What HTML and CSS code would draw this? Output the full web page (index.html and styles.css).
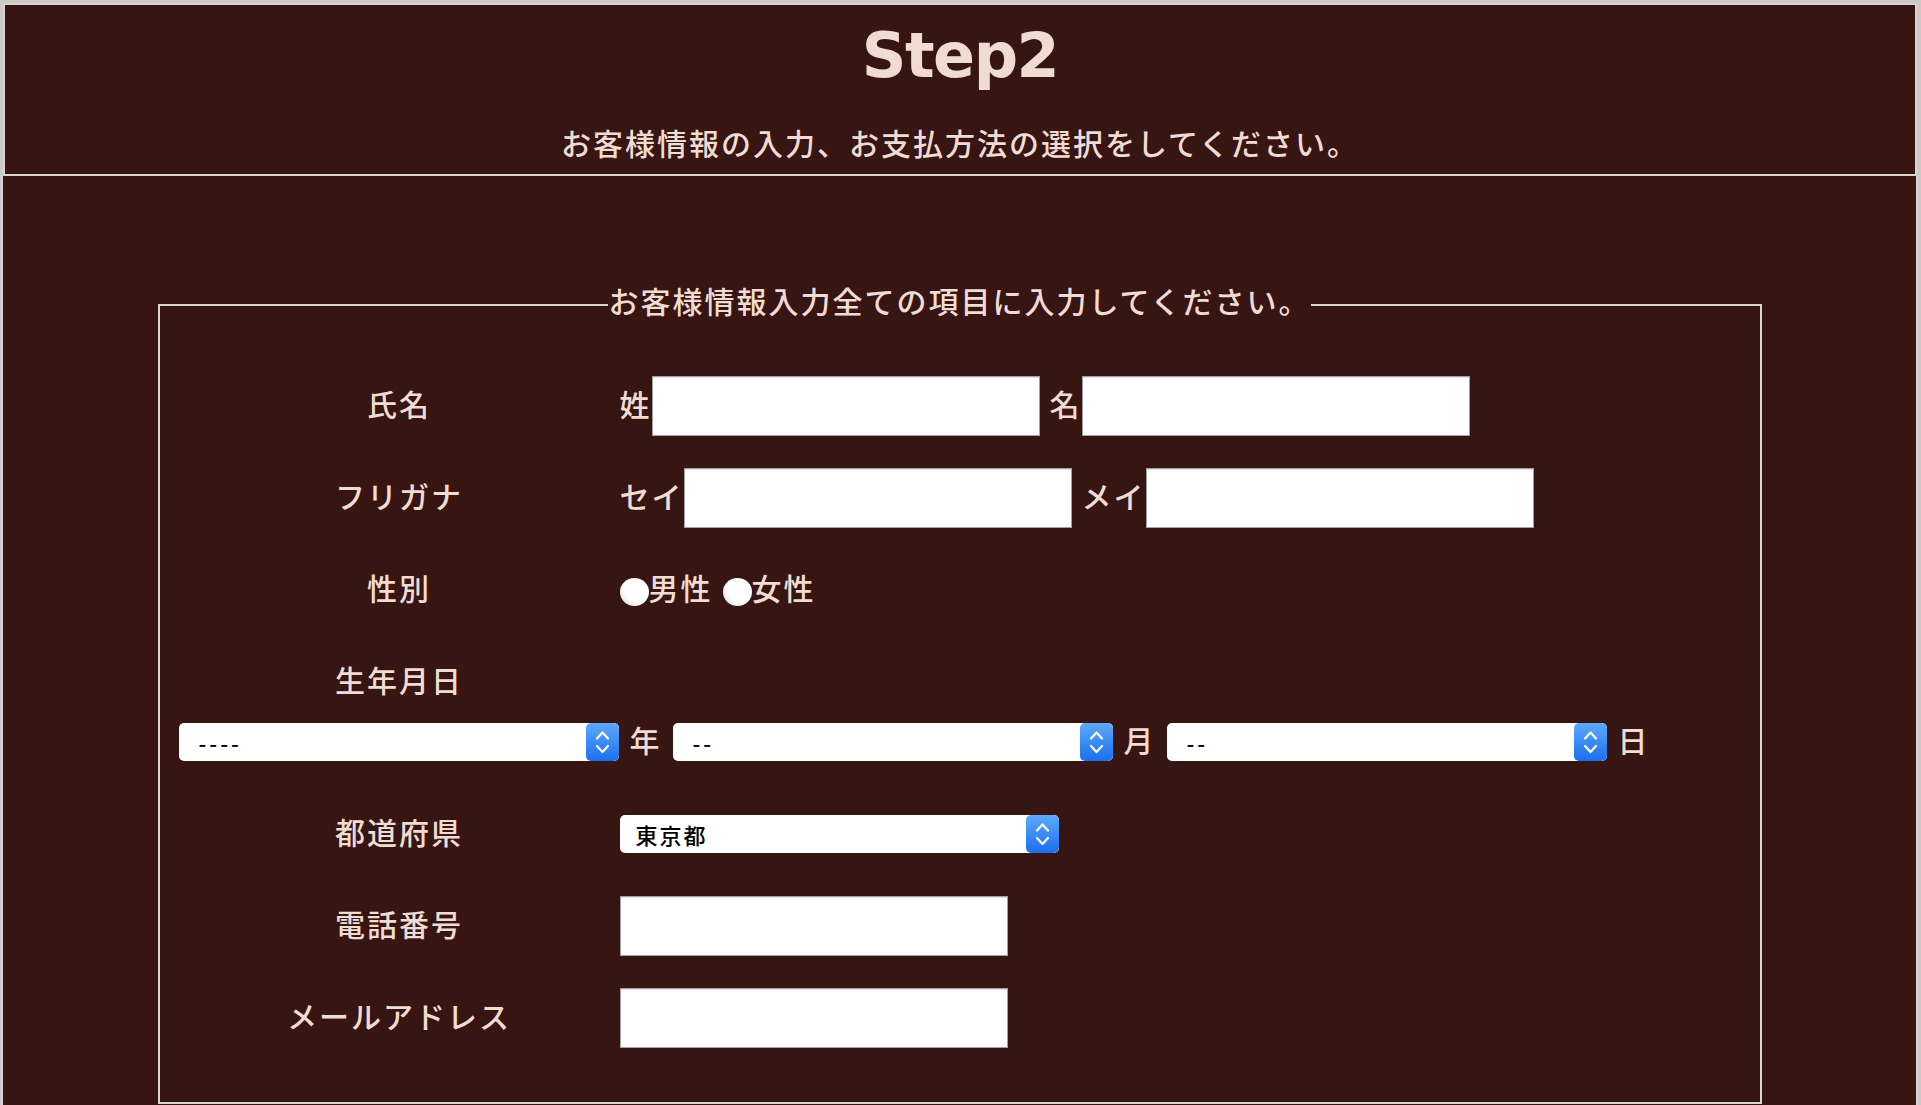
FILE: index.html
```html
<!DOCTYPE html>
<html lang="ja">
<head>
<meta charset="utf-8">
<title>Step2 お客様情報の入力</title>
<link rel="stylesheet" href="styles.css">
</head>
<body>
<header class="page-head">
  <h1 class="step-title">Step2</h1>
  <p class="step-lead">お客様情報の入力、お支払方法の選択をしてください。</p>
</header>
<main class="page-main">
  <form class="order-form">
    <fieldset class="info-set">
      <legend class="info-legend">お客様情報入力全ての項目に入力してください。</legend>

      <div class="row">
        <div class="row-label">氏名</div>
        <div class="row-value">
          <label class="pair"><span class="txt">姓</span><input class="text-box" type="text" name="last_name"></label>
          <label class="pair"><span class="txt">名</span><input class="text-box" type="text" name="first_name"></label>
        </div>
      </div>

      <div class="row">
        <div class="row-label">フリガナ</div>
        <div class="row-value">
          <label class="pair"><span class="txt">セイ</span><input class="text-box" type="text" name="last_kana"></label>
          <label class="pair"><span class="txt">メイ</span><input class="text-box" type="text" name="first_kana"></label>
        </div>
      </div>

      <div class="row">
        <div class="row-label">性別</div>
        <div class="row-value">
          <label class="choice"><input class="radio" type="radio" name="sex" value="m"><span class="txt">男性</span></label>
          <label class="choice"><input class="radio" type="radio" name="sex" value="f"><span class="txt">女性</span></label>
        </div>
      </div>

      <div class="row row-tight">
        <div class="row-label">生年月日</div>
      </div>
      <div class="date-row">
        <div class="select-box select-wide">
          <select class="select" name="year"><option>----</option><option>1990</option><option>1991</option></select>
          <span class="stepper"><svg width="33" height="38" viewBox="0 0 33 38"><polyline points="11,15.5 16.5,9.5 22,15.5" fill="none" stroke="#fff" stroke-width="2.2" stroke-linecap="round" stroke-linejoin="round"/><polyline points="11,23 16.5,29 22,23" fill="none" stroke="#fff" stroke-width="2.2" stroke-linecap="round" stroke-linejoin="round"/></svg></span>
        </div>
        <span class="txt">年</span>
        <div class="select-box select-wide">
          <select class="select" name="month"><option>--</option><option>1</option><option>2</option></select>
          <span class="stepper"><svg width="33" height="38" viewBox="0 0 33 38"><polyline points="11,15.5 16.5,9.5 22,15.5" fill="none" stroke="#fff" stroke-width="2.2" stroke-linecap="round" stroke-linejoin="round"/><polyline points="11,23 16.5,29 22,23" fill="none" stroke="#fff" stroke-width="2.2" stroke-linecap="round" stroke-linejoin="round"/></svg></span>
        </div>
        <span class="txt">月</span>
        <div class="select-box select-wide">
          <select class="select" name="day"><option>--</option><option>1</option><option>2</option></select>
          <span class="stepper"><svg width="33" height="38" viewBox="0 0 33 38"><polyline points="11,15.5 16.5,9.5 22,15.5" fill="none" stroke="#fff" stroke-width="2.2" stroke-linecap="round" stroke-linejoin="round"/><polyline points="11,23 16.5,29 22,23" fill="none" stroke="#fff" stroke-width="2.2" stroke-linecap="round" stroke-linejoin="round"/></svg></span>
        </div>
        <span class="txt">日</span>
      </div>

      <div class="row">
        <div class="row-label">都道府県</div>
        <div class="row-value">
          <div class="select-box select-pref">
            <select class="select select-kanji" name="pref"><option>北海道</option><option selected>東京都</option><option>大阪府</option></select>
            <span class="stepper"><svg width="33" height="38" viewBox="0 0 33 38"><polyline points="11,15.5 16.5,9.5 22,15.5" fill="none" stroke="#fff" stroke-width="2.2" stroke-linecap="round" stroke-linejoin="round"/><polyline points="11,23 16.5,29 22,23" fill="none" stroke="#fff" stroke-width="2.2" stroke-linecap="round" stroke-linejoin="round"/></svg></span>
          </div>
        </div>
      </div>

      <div class="row">
        <div class="row-label">電話番号</div>
        <div class="row-value">
          <input class="text-box" type="tel" name="tel">
        </div>
      </div>

      <div class="row row-last">
        <div class="row-label">メールアドレス</div>
        <div class="row-value">
          <input class="text-box" type="email" name="mail">
        </div>
      </div>
    </fieldset>
  </form>
</main>
</body>
</html>
```

FILE: styles.css
```css
* {
  box-sizing: border-box;
}

html {
  background: #cdc9c8;
}

body {
  margin: 0;
  padding: 3px 0 0;
  background: #cdc9c8;
  color: #f0dcd2;
  font-family: "Noto Sans CJK JP", sans-serif;
  font-weight: 500;
}

/* ---------- header ---------- */
.page-head {
  margin: 0 4px 0 3px;
  border: 2px solid #d8d3d0;
  background: #361513;
  text-align: center;
  padding: 15px 0 11px;
}

.step-title {
  margin: 0;
  font-family: "DejaVu Sans", sans-serif;
  font-weight: bold;
  font-size: 62px;
  line-height: 72px;
  letter-spacing: -1.5px;
  color: #f0dcd0;
}

.step-lead {
  margin: 30px 0 0;
  font-size: 30px;
  line-height: 40px;
  letter-spacing: 2px;
  padding-bottom: 1px;
}

/* ---------- main ---------- */
.page-main {
  margin: 0 3px 0 1px;
  border-left: 2px solid #d8d3d0;
  border-right: 2px solid #d8d3d0;
  background: #361513;
  padding: 104px 0 60px;
}

.order-form {
  margin: 0;
}

.info-set {
  width: 1604px;
  margin: 0 auto;
  border: 2px solid #d8d3d0;
  padding: 46px 19px 54px;
  min-width: 0;
}

.info-legend {
  margin: 0 auto;
  padding: 0 0 10px;
  font-size: 30px;
  line-height: 40px;
  letter-spacing: 2px;
}

/* ---------- rows ---------- */
.row {
  display: flex;
  align-items: center;
  height: 60px;
  margin-bottom: 32px;
  font-size: 30px;
  line-height: 40px;
  letter-spacing: 2px;
}

.row-tight {
  margin-bottom: 0;
}

.row-last {
  margin-bottom: 0;
}

.row-label {
  flex: none;
  width: 441px;
  text-align: center;
  padding-bottom: 7px;
}

.row-value {
  display: flex;
  align-items: center;
  gap: 10px;
}

.pair {
  display: inline-flex;
  align-items: center;
}

.txt {
  white-space: nowrap;
  padding-bottom: 7px;
}

.text-box {
  width: 388px;
  height: 60px;
  margin: 0;
  padding: 0 8px;
  border: 1px solid #a3a1a0;
  box-shadow: inset 0 1px 0 #e4e4e4;
  background: #fff;
  font: 22px "Noto Sans CJK JP", sans-serif;
  outline: none;
}

/* ---------- radios ---------- */
.choice {
  display: inline-flex;
  align-items: center;
}

.radio {
  appearance: none;
  -webkit-appearance: none;
  width: 29px;
  height: 28px;
  margin: 4px 0 0;
  border-radius: 50%;
  background: radial-gradient(ellipse at 62% 38%, #ffffff 50%, #eeeeee 72%, #b3adab 100%);
  flex: none;
}

/* ---------- birth date ---------- */
.date-row {
  display: flex;
  align-items: center;
  gap: 11px;
  height: 60px;
  margin-bottom: 32px;
  font-size: 30px;
  line-height: 40px;
  letter-spacing: 2px;
}

/* ---------- select ---------- */
.select-box {
  display: flex;
  height: 38px;
  background: #fff;
  border-radius: 5px;
  overflow: hidden;
  flex: none;
}

.select-wide {
  width: 440px;
}

.select-pref {
  width: 439px;
}

.select {
  appearance: none;
  -webkit-appearance: none;
  flex: 1;
  min-width: 0;
  height: 38px;
  margin: 0;
  border: 0;
  padding: 0 0 0 20px;
  background: transparent;
  color: #000;
  font: 500 22px "Noto Sans CJK JP", sans-serif;
  letter-spacing: 3px;
  outline: none;
}

.select-kanji {
  padding-left: 16px;
  letter-spacing: 2px;
}

.stepper {
  flex: none;
  width: 33px;
  height: 38px;
  border-radius: 5px;
  background: linear-gradient(#5ea9fc, #1a70ee);
  display: flex;
}
```
